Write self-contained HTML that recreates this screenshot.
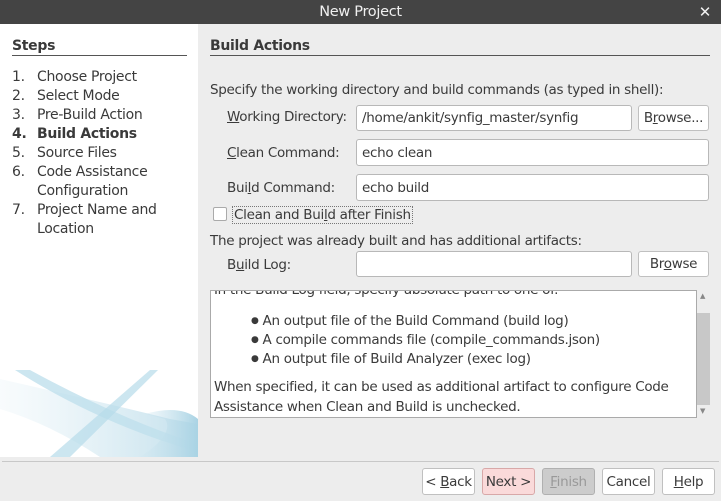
<!DOCTYPE html>
<html><head><meta charset="utf-8"><style>
*{margin:0;padding:0;box-sizing:border-box}
body{width:721px;height:501px;background:#ededed;font-family:"DejaVu Sans","Liberation Sans",sans-serif;font-size:13.5px;color:#3a3a3a;position:relative;overflow:hidden;letter-spacing:-0.3px}
.a{position:absolute;white-space:nowrap}
.title{left:0;top:0;width:721px;height:24px;background:#444;color:#f0f0f0;font-weight:bold;text-align:center;line-height:24px;font-size:14px}
.left{left:0;top:24px;width:198px;height:433px;background:#fff;overflow:hidden}
.inp{position:absolute;background:#fff;border:1px solid #b8b8b8;border-radius:3px;padding-left:5px;line-height:26px}
.btn{position:absolute;background:#fff;border:1px solid #c0c0c0;border-radius:3px;text-align:center;line-height:26px}
u{text-decoration:underline}
.b{font-size:9px;vertical-align:2px}
</style></head><body>
<div class="a title" style="font-weight:normal;font-size:14.5px">New Project<span style="position:absolute;right:10px;top:0;font-size:15px">✕</span></div>
<div class="a left">
<svg width="198" height="433" style="position:absolute;left:0;top:0">
<defs><linearGradient id="g" x1="0" x2="1"><stop offset="0" stop-color="#cfe6f0" stop-opacity="0.2"/><stop offset="1" stop-color="#a9d3e4"/></linearGradient></defs>
<path d="M0 355 Q110 380 170 395 L198 400 L198 433 L100 433 Q50 400 0 385Z" fill="url(#g)" opacity="0.7"/>
<path d="M15 346 L30 346 Q120 395 198 420 L198 428 Q100 400 15 346Z" fill="#bfe0ec" opacity="0.8"/>
<path d="M50 433 L150 346 L158 346 L70 433Z" fill="#b7dbe9" opacity="0.7"/>
<path d="M145 390 Q180 380 198 395 L198 433 L140 433 Q175 410 165 395Z" fill="url(#g)"/>
</svg>
</div>
<div class="a" style="left:12px;top:38px;font-weight:bold;font-size:14px">Steps</div>
<div class="a" style="left:12px;top:55px;width:175px;height:1px;background:#555"></div>
<div class="a" style="left:12px;top:68px;line-height:19px;font-size:14px">
1.<br>2.<br>3.<br><b>4.</b><br>5.<br>6.<br><br>7.</div>
<div class="a" style="left:37px;top:68px;line-height:19px;font-size:14px">Choose Project<br>Select Mode<br>Pre-Build Action<br><b>Build Actions</b><br>Source Files<br>Code Assistance<br>Configuration<br>Project Name and<br>Location</div>

<div class="a" style="left:210px;top:38px;font-weight:bold;font-size:14px">Build Actions</div>
<div class="a" style="left:210px;top:55px;width:500px;height:1px;background:#555"></div>
<div class="a" style="left:210px;top:82px">Specify the working directory and build commands (as typed in shell):</div>
<div class="a" style="left:227px;top:109px"><u>W</u>orking Directory:</div>
<div class="inp" style="left:356px;top:105px;width:276px;height:26px;line-height:24px">/home/ankit/synfig_master/synfig</div>
<div class="btn" style="left:638px;top:105px;width:71px;height:26px;line-height:24px"><span>B<u>r</u>owse...</span></div>
<div class="a" style="left:227px;top:145px"><u>C</u>lean Command:</div>
<div class="inp" style="left:356px;top:139px;width:353px;height:27px">echo clean</div>
<div class="a" style="left:227px;top:180px">Bui<u>l</u>d Command:</div>
<div class="inp" style="left:356px;top:174px;width:353px;height:27px">echo build</div>
<div class="a" style="left:213px;top:207px;width:14px;height:14px;border:1px solid #aaa;border-radius:2px;background:#fff"></div>
<div class="a" style="left:232px;top:206px;border:1px dotted #777;padding:0 1px;line-height:16px">Clean and Bui<u>l</u>d after Finish</div>
<div class="a" style="left:210px;top:233px">The project was already built and has additional artifacts:</div>
<div class="a" style="left:227px;top:257px">B<u>u</u>ild Log:</div>
<div class="inp" style="left:356px;top:251px;width:276px;height:26px"></div>
<div class="btn" style="left:638px;top:251px;width:71px;height:26px;line-height:24px">Br<u>o</u>wse</div>

<div class="a" style="left:210px;top:290px;width:487px;height:128px;background:#fff;border:1px solid #aaa;overflow:hidden">
<div class="a" style="left:3px;top:-9px">In the Build Log field, specify absolute path to one of:</div>
<div class="a" style="left:40px;top:21px;line-height:19px"><span class="b">●</span> An output file of the Build Command (build log)<br><span class="b">●</span> A compile commands file (compile_commands.json)<br><span class="b">●</span> An output file of Build Analyzer (exec log)</div>
<div class="a" style="left:3px;top:86px;line-height:20px">When specified, it can be used as additional artifact to configure Code<br>Assistance when Clean and Build is unchecked.</div>
</div>
<div class="a" style="left:697px;top:290px;width:13px;height:128px;background:#ededed"></div>
<div class="a" style="left:697px;top:313px;width:13px;height:92px;background:#c8c8c8"></div>
<div class="a" style="left:700px;top:292px;font-size:7px;color:#888">▲</div>
<div class="a" style="left:700px;top:407px;font-size:7px;color:#888">▼</div>

<div class="a" style="left:2px;top:461px;width:717px;height:1px;background:#c8c8c8"></div>
<div class="btn" style="left:422px;top:468px;width:53px;height:27px">&lt; <u>B</u>ack</div>
<div class="btn" style="left:482px;top:468px;width:53px;height:27px;background:#fadada;border-color:#d8a8a8">Next &gt;</div>
<div class="btn" style="left:542px;top:468px;width:53px;height:27px;background:#ccc;border-color:#b0b0b0;color:#999"><u>F</u>inish</div>
<div class="btn" style="left:602px;top:468px;width:53px;height:27px">Cancel</div>
<div class="btn" style="left:662px;top:468px;width:53px;height:27px"><u>H</u>elp</div>
</body></html>
